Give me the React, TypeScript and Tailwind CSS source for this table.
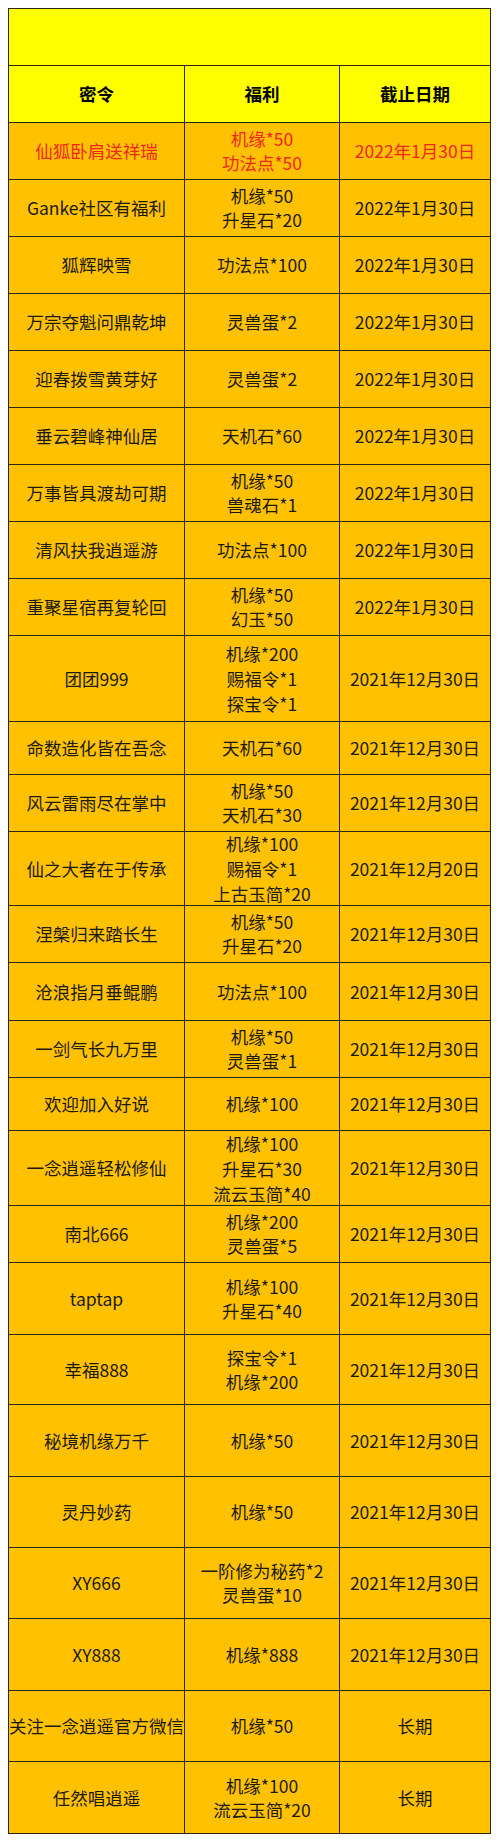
const rows: { code: string; gifts: string[]; date: string; h: string; red?: boolean }[] = [
  { code: '仙狐卧肩送祥瑞', gifts: ['机缘*50', '功法点*50'], date: '2022年1月30日', h: 'h-[57px]', red: true },
  { code: 'Ganke社区有福利', gifts: ['机缘*50', '升星石*20'], date: '2022年1月30日', h: 'h-[57px]' },
  { code: '狐辉映雪', gifts: ['功法点*100'], date: '2022年1月30日', h: 'h-[57px]' },
  { code: '万宗夺魁问鼎乾坤', gifts: ['灵兽蛋*2'], date: '2022年1月30日', h: 'h-[57px]' },
  { code: '迎春拨雪黄芽好', gifts: ['灵兽蛋*2'], date: '2022年1月30日', h: 'h-[57px]' },
  { code: '垂云碧峰神仙居', gifts: ['天机石*60'], date: '2022年1月30日', h: 'h-[57px]' },
  { code: '万事皆具渡劫可期', gifts: ['机缘*50', '兽魂石*1'], date: '2022年1月30日', h: 'h-[57px]' },
  { code: '清风扶我逍遥游', gifts: ['功法点*100'], date: '2022年1月30日', h: 'h-[57px]' },
  { code: '重聚星宿再复轮回', gifts: ['机缘*50', '幻玉*50'], date: '2022年1月30日', h: 'h-[57px]' },
  { code: '团团999', gifts: ['机缘*200', '赐福令*1', '探宝令*1'], date: '2021年12月30日', h: 'h-[86px]' },
  { code: '命数造化皆在吾念', gifts: ['天机石*60'], date: '2021年12月30日', h: 'h-[53px]' },
  { code: '风云雷雨尽在掌中', gifts: ['机缘*50', '天机石*30'], date: '2021年12月30日', h: 'h-[57px]' },
  { code: '仙之大者在于传承', gifts: ['机缘*100', '赐福令*1', '上古玉简*20'], date: '2021年12月20日', h: 'h-[74px]' },
  { code: '涅槃归来踏长生', gifts: ['机缘*50', '升星石*20'], date: '2021年12月30日', h: 'h-[57px]' },
  { code: '沧浪指月垂鲲鹏', gifts: ['功法点*100'], date: '2021年12月30日', h: 'h-[58px]' },
  { code: '一剑气长九万里', gifts: ['机缘*50', '灵兽蛋*1'], date: '2021年12月30日', h: 'h-[57px]' },
  { code: '欢迎加入好说', gifts: ['机缘*100'], date: '2021年12月30日', h: 'h-[53px]' },
  { code: '一念逍遥轻松修仙', gifts: ['机缘*100', '升星石*30', '流云玉简*40'], date: '2021年12月30日', h: 'h-[75px]' },
  { code: '南北666', gifts: ['机缘*200', '灵兽蛋*5'], date: '2021年12月30日', h: 'h-[57px]' },
  { code: 'taptap', gifts: ['机缘*100', '升星石*40'], date: '2021年12月30日', h: 'h-[72px]' },
  { code: '幸福888', gifts: ['探宝令*1', '机缘*200'], date: '2021年12月30日', h: 'h-[70px]' },
  { code: '秘境机缘万千', gifts: ['机缘*50'], date: '2021年12月30日', h: 'h-[72px]' },
  { code: '灵丹妙药', gifts: ['机缘*50'], date: '2021年12月30日', h: 'h-[71px]' },
  { code: 'XY666', gifts: ['一阶修为秘药*2', '灵兽蛋*10'], date: '2021年12月30日', h: 'h-[71px]' },
  { code: 'XY888', gifts: ['机缘*888'], date: '2021年12月30日', h: 'h-[72px]' },
  { code: '关注一念逍遥官方微信', gifts: ['机缘*50'], date: '长期', h: 'h-[71px]' },
  { code: '任然唱逍遥', gifts: ['机缘*100', '流云玉简*20'], date: '长期', h: 'h-[71px]' },
];

function Cell({ children, last, className = '' }: { children: React.ReactNode; last?: boolean; className?: string }) {
  return (
    <div
      className={`flex flex-col items-center justify-center overflow-hidden whitespace-nowrap text-center ${
        last ? '' : 'border-r border-[#2a2619]'
      } ${className}`}
    >
      {children}
    </div>
  );
}

export default function App() {
  return (
    <div className="min-h-[1842px] w-[500px] bg-white pt-[8px] pl-[8px]">
      <div
        className="w-[483px] border border-[#2a2619] text-[17.5px] leading-[24px] text-[#1c1a14]"
        style={{ fontFamily: '"Noto Sans CJK SC", "Noto Sans", sans-serif' }}
      >
        {/* title bar */}
        <div className="h-[57px] border-b border-[#2a2619] bg-[#ffff00]"></div>

        {/* header */}
        <div className="grid h-[57px] grid-cols-[176px_155px_150px] border-b border-[#2a2619] bg-[#ffff00] font-bold text-black">
          <Cell>密令</Cell>
          <Cell>福利</Cell>
          <Cell last>截止日期</Cell>
        </div>

        {rows.map((row, i) => (
          <div
            key={i}
            className={`grid grid-cols-[176px_155px_150px] bg-[#ffc100] ${row.h} ${
              i === rows.length - 1 ? '' : 'border-b border-[#2a2619]'
            } ${row.red ? 'text-[#f0281c]' : ''}`}
          >
            <Cell>{row.code}</Cell>
            <Cell className={row.gifts.length > 2 ? 'leading-[25px]' : ''}>
              {row.gifts.map((g) => (
                <span key={g}>{g}</span>
              ))}
            </Cell>
            <Cell last>{row.date}</Cell>
          </div>
        ))}
      </div>
    </div>
  );
}
